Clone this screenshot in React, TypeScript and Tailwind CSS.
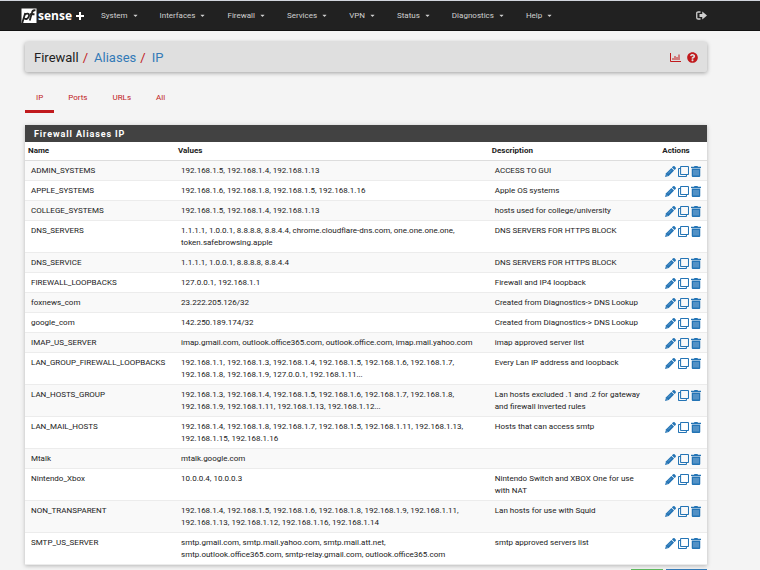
import React from "react";
import { FaCaretDown, FaQuestionCircle, FaRegClone } from "react-icons/fa";

const menus = [
  "System",
  "Interfaces",
  "Firewall",
  "Services",
  "VPN",
  "Status",
  "Diagnostics",
  "Help",
];

const tabs = ["IP", "Ports", "URLs", "All"];

const aliases = [
  {
    name: "ADMIN_SYSTEMS",
    values: "192.168.1.5, 192.168.1.4, 192.168.1.13",
    description: "ACCESS TO GUI",
  },
  {
    name: "APPLE_SYSTEMS",
    values: "192.168.1.6, 192.168.1.8, 192.168.1.5, 192.168.1.16",
    description: "Apple OS systems",
  },
  {
    name: "COLLEGE_SYSTEMS",
    values: "192.168.1.5, 192.168.1.4, 192.168.1.13",
    description: "hosts used for college/university",
  },
  {
    name: "DNS_SERVERS",
    values:
      "1.1.1.1, 1.0.0.1, 8.8.8.8, 8.8.4.4, chrome.cloudflare-dns.com, one.one.one.one, token.safebrowsing.apple",
    description: "DNS SERVERS FOR HTTPS BLOCK",
  },
  {
    name: "DNS_SERVICE",
    values: "1.1.1.1, 1.0.0.1, 8.8.8.8, 8.8.4.4",
    description: "DNS SERVERS FOR HTTPS BLOCK",
  },
  {
    name: "FIREWALL_LOOPBACKS",
    values: "127.0.0.1, 192.168.1.1",
    description: "Firewall and IP4 loopback",
  },
  {
    name: "foxnews_com",
    values: "23.222.205.126/32",
    description: "Created from Diagnostics-> DNS Lookup",
  },
  {
    name: "google_com",
    values: "142.250.189.174/32",
    description: "Created from Diagnostics-> DNS Lookup",
  },
  {
    name: "IMAP_US_SERVER",
    values: "imap.gmail.com, outlook.office365.com, outlook.office.com, imap.mail.yahoo.com",
    description: "imap approved server list",
  },
  {
    name: "LAN_GROUP_FIREWALL_LOOPBACKS",
    values:
      "192.168.1.1, 192.168.1.3, 192.168.1.4, 192.168.1.5, 192.168.1.6, 192.168.1.7, 192.168.1.8, 192.168.1.9, 127.0.0.1, 192.168.1.11...",
    description: "Every Lan IP address and loopback",
  },
  {
    name: "LAN_HOSTS_GROUP",
    values:
      "192.168.1.3, 192.168.1.4, 192.168.1.5, 192.168.1.6, 192.168.1.7, 192.168.1.8, 192.168.1.9, 192.168.1.11, 192.168.1.13, 192.168.1.12...",
    description: "Lan hosts excluded .1 and .2 for gateway and firewall inverted rules",
  },
  {
    name: "LAN_MAIL_HOSTS",
    values:
      "192.168.1.4, 192.168.1.8, 192.168.1.7, 192.168.1.5, 192.168.1.11, 192.168.1.13, 192.168.1.15, 192.168.1.16",
    description: "Hosts that can access smtp",
  },
  {
    name: "Mtalk",
    values: "mtalk.google.com",
    description: "",
  },
  {
    name: "Nintendo_Xbox",
    values: "10.0.0.4, 10.0.0.3",
    description: "Nintendo Switch and XBOX One for use with NAT",
  },
  {
    name: "NON_TRANSPARENT",
    values:
      "192.168.1.4, 192.168.1.5, 192.168.1.6, 192.168.1.8, 192.168.1.9, 192.168.1.11, 192.168.1.13, 192.168.1.12, 192.168.1.16, 192.168.1.14",
    description: "Lan hosts for use with Squid",
  },
  {
    name: "SMTP_US_SERVER",
    values:
      "smtp.gmail.com, smtp.mail.yahoo.com, smtp.mail.att.net, smtp.outlook.office365.com, smtp-relay.gmail.com, outlook.office365.com",
    description: "smtp approved servers list",
  },
];

const Logo = () => (
  <a href="#" aria-label="pfSense Plus" className="flex items-center text-white">
    <svg width="16" height="15" viewBox="0 0 32 30" fill="none" aria-hidden="true">
      <path d="M1 1H31V30H1Z" fill="#fff" />
      <path
        d="M2.500 30L8.500 10M7.500 14C10 10 17 10 16 16C15 22 9 23.500 6.500 20.500"
        stroke="#212121"
        strokeWidth="3.600"
      />
      <path
        d="M17.500 25L22 9C23 5 25.500 4 29 4.800M17.500 12.500H27"
        stroke="#212121"
        strokeWidth="3.600"
      />
    </svg>
    <span className="pl-px font-['Open_Sans',sans-serif] text-xs leading-4 font-bold">sense</span>
    <svg width="8" height="8" viewBox="0 0 8 8" className="ml-1" aria-hidden="true">
      <path d="M3 0H5V3H8V5H5V8H3V5H0V3H3Z" fill="#fff" />
    </svg>
  </a>
);

const SignOutIcon = () => (
  <svg width="11" height="9" viewBox="0 0 22 18" aria-hidden="true">
    <path
      d="M9 2H4.500C2.500 2 1.500 3 1.500 4.500V13.500C1.500 15 2.500 16 4.500 16H9"
      fill="none"
      stroke="currentColor"
      strokeWidth="2.600"
    />
    <path d="M7 6H12.500V1L22 9L12.500 17V12H7Z" fill="currentColor" />
  </svg>
);

const ChartIcon = () => (
  <svg width="11" height="9" viewBox="0 0 22 18" aria-hidden="true">
    <path d="M1 0V17H22" fill="none" stroke="currentColor" strokeWidth="2" />
    <path d="M6 14V10M10 14V6M14 14V8M18 14V3" stroke="currentColor" strokeWidth="2" />
  </svg>
);

const PencilIcon = () => (
  <svg width="11" height="11" viewBox="0 0 22 22" fill="currentColor" aria-hidden="true">
    <path d="M15.500 1.200C16.800 -0.200 18.300 -0.200 19.500 1L21 2.500C22.200 3.700 22.200 5.200 20.800 6.500L19.200 8.100L13.900 2.800Z" />
    <path d="M12.800 3.900L18.100 9.200L7.500 19.800L0 22L2.200 14.500Z" />
    <path d="M6 15L12.500 8.500" stroke="#a9c9e4" strokeWidth="1" />
    <path d="M2.600 17.400L4.600 19.400" stroke="#cfe0ef" strokeWidth="1.200" />
  </svg>
);

const TrashIcon = () => (
  <svg width="10" height="11" viewBox="0 0 20 22" aria-hidden="true">
    <path
      d="M6 1.500L7 0H13L14 1.500H20V4H0V1.500ZM1.500 5.200H18.500V19.500C18.500 21 17.500 22 16 22H4C2.500 22 1.500 21 1.500 19.500Z"
      fill="currentColor"
    />
    <path d="M6 8V19M10 8V19M14 8V19" stroke="#a9c9e4" strokeWidth="1.400" />
  </svg>
);

const RowActions = ({ name }: { name: string }) => (
  <div className="flex h-3 items-center gap-0.5 text-[#2474b5]">
    <button type="button" aria-label={`Edit ${name}`} className="cursor-pointer">
      <PencilIcon />
    </button>
    <button type="button" aria-label={`Copy ${name}`} className="cursor-pointer">
      <FaRegClone size={11} />
    </button>
    <button type="button" aria-label={`Delete ${name}`} className="cursor-pointer">
      <TrashIcon />
    </button>
  </div>
);

const App = () => {
  return (
    <div className="min-h-screen bg-[#f4f4f4] font-[Roboto,sans-serif] text-[8px] leading-3 text-[#212121]">
      <header className="flex h-[31px] items-center border-t border-b border-t-gray-300 border-b-[#111] bg-[#212121] pr-[53px] pl-[21px]">
        <Logo />
        <nav className="ml-[17px] flex grow items-center gap-[21px] text-[#d0d0d0]">
          {menus.map((menu) => (
            <button
              key={menu}
              type="button"
              className="flex cursor-pointer items-center gap-1 whitespace-nowrap"
            >
              {menu}
              <FaCaretDown size={7} />
            </button>
          ))}
        </nav>
        <button type="button" aria-label="Log out" className="cursor-pointer text-[#d0d0d0]">
          <SignOutIcon />
        </button>
      </header>

      <main className="pr-[53px] pl-[25px]">
        <div className="mt-[11px] flex h-[30px] items-center justify-between rounded-xs bg-[#dfdfdf] px-[9px] pt-px shadow-[0_1px_4px_rgba(0,0,0,0.35)]">
          <h1 className="flex gap-1 text-[13px] leading-4">
            <span>Firewall</span>
            <span className="pr-0.5 text-[#c11a1d]">/</span>
            <a href="#" className="text-[#337ab7]">
              Aliases
            </a>
            <span className="pr-0.5 text-[#c11a1d]">/</span>
            <a href="#" className="text-[#337ab7]">
              IP
            </a>
          </h1>
          <div className="flex items-center gap-1.5 text-[#c11a1d]">
            <button type="button" aria-label="Statistics" className="cursor-pointer">
              <ChartIcon />
            </button>
            <button type="button" aria-label="Help" className="cursor-pointer">
              <FaQuestionCircle size={11} />
            </button>
          </div>
        </div>

        <nav className="mt-3.5 flex gap-[3px] text-[#c11a1d]">
          {tabs.map((tab, i) => (
            <a
              key={tab}
              href="#"
              className={`border-b-3 px-[11px] pt-1.5 pb-1.5 ${
                i === 0 ? "border-[#c11a1d]" : "border-transparent"
              }`}
            >
              {tab}
            </a>
          ))}
        </nav>

        <section className="mt-3 bg-white shadow-[0_1px_4px_rgba(0,0,0,0.25)]">
          <h2 className="bg-[#424242] px-[9px] pt-[3px] pb-0.5 text-[9px] leading-3 font-bold tracking-widest text-white">
            Firewall Aliases IP
          </h2>
          <table className="w-full table-fixed border-separate border-spacing-0 text-left">
            <thead>
              <tr className="*:border-b *:border-[#dddddd]">
                <th className="w-[22%] px-[3px] py-[3px]">Name</th>
                <th className="w-[46%] px-[3px]">Values</th>
                <th className="w-[25%] px-[3px]">Description</th>
                <th className="w-[7%] px-[3px]">Actions</th>
              </tr>
            </thead>
            <tbody>
              {aliases.map((alias) => (
                <tr
                  key={alias.name}
                  className="align-top *:border-b *:border-[#ececec] *:pt-1 *:pb-[3px] *:pl-1.5 odd:bg-[#f9f9f9]"
                >
                  <td>{alias.name}</td>
                  <td className="pr-2">{alias.values}</td>
                  <td className="pr-3.5">{alias.description}</td>
                  <td>
                    <RowActions name={alias.name} />
                  </td>
                </tr>
              ))}
            </tbody>
          </table>
        </section>

        <div className="mt-1 flex justify-end gap-[3px]">
          <button type="button" aria-label="Add" className="h-5 w-8 bg-[#5cb85c]" />
          <button type="button" aria-label="Import" className="h-5 w-[41px] bg-[#337ab7]" />
        </div>
      </main>
    </div>
  );
};

export default App;
